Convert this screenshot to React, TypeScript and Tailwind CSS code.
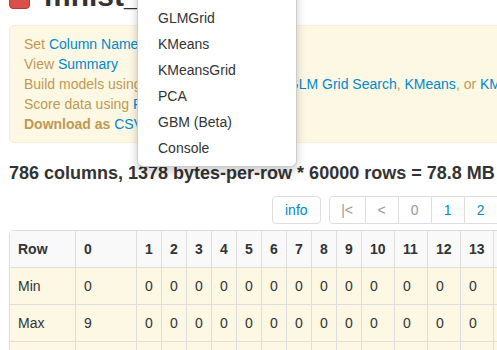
import React from "react";

const menuItems = ["GLM", "GLMGrid", "KMeans", "KMeansGrid", "PCA", "GBM (Beta)", "Console"];

const cols = ["0", "1", "2", "3", "4", "5", "6", "7", "8", "9", "10", "11", "12", "13", "14", "15"];

const rows = [
  { name: "Min", first: "0" },
  { name: "Max", first: "9" },
  { name: "Mean", first: "4.45" },
];

const App = () => {
  return (
    <div
      className="relative h-[350px] w-[497px] overflow-hidden bg-white text-[14px] leading-[20px] text-[#333]"
      style={{ fontFamily: '"Liberation Sans", Arial, sans-serif' }}
    >
      <div className="w-[1200px] pl-[9px]">
        {/* Title row, page is scrolled so only the bottom shows */}
        <div className="-mt-[22px] mb-[11px] flex items-start gap-[14px]">
          <button className="mt-[1px] h-[30px] w-[21px] rounded-[4px] border border-[#bd362f] bg-[#da4f49] text-[12px] font-bold text-white">
            x
          </button>
          <h1 className="text-[30px] font-bold leading-[36px] text-[#333]">mnist_train.hex</h1>
        </div>

        {/* Alert */}
        <div className="w-[700px] rounded-[4px] border border-[#fbeed5] bg-[#fcf8e3] py-[8px] pl-[14px] pr-[35px] text-[#c09853]">
          <div>
            Set <a className="text-[#0088cc]">Column Names</a>
          </div>
          <div>
            View <a className="text-[#0088cc]">Summary</a>
          </div>
          <div>
            Build models using <a className="text-[#0088cc]">Random Forest</a>,{" "}
            <a className="text-[#0088cc]">GLM</a>, <a className="text-[#0088cc]">GLM Grid Search</a>,{" "}
            <a className="text-[#0088cc]">KMeans</a>, or <a className="text-[#0088cc]">KMeansGrid</a>
          </div>
          <div>
            Score data using <a className="text-[#0088cc]">Random Forest</a>
          </div>
          <div>
            <b>Download as</b> <a className="text-[#0088cc]">CSV</a>
          </div>
        </div>

        <h4 className="mt-[20px] mb-[13px] text-[18px] font-bold leading-[20px] text-[#333]">
          786 columns, 1378 bytes-per-row * 60000 rows = 78.8 MB
        </h4>

        {/* pager */}
        <div className="ml-[263px] flex items-center gap-[8px]">
          <button className="h-[28px] rounded-[4px] border border-[#ddd] bg-white px-[12px] text-[#0088cc]">
            info
          </button>
          <ul className="flex rounded-[4px] border border-[#ddd] bg-white">
            <li className="w-[36px] border-r border-[#ddd] text-center leading-[26px] text-[#999]">|&lt;</li>
            <li className="w-[33px] border-r border-[#ddd] text-center leading-[26px] text-[#999]">&lt;</li>
            <li className="w-[33px] border-r border-[#ddd] text-center leading-[26px] text-[#999]">0</li>
            <li className="w-[33px] border-r border-[#ddd] text-center leading-[26px] text-[#0088cc]">1</li>
            <li className="w-[33px] border-r border-[#ddd] text-center leading-[26px] text-[#0088cc]">2</li>
            <li className="w-[33px] border-r border-[#ddd] text-center leading-[26px] text-[#0088cc]">3</li>
          </ul>
        </div>

        {/* table */}
        <table className="mt-[6px] border-separate border-spacing-0 rounded-[4px] border border-[#ddd]">
          <thead>
            <tr className="bg-[#f9f9f9]">
              <th className="w-[65px] px-[8px] py-[8px] text-left font-bold">Row</th>
              {cols.map((c) => (
                <th
                  key={c}
                  className={`border-l border-[#ddd] px-[8px] py-[8px] text-left font-bold ${
                    c === "0" ? "w-[61px]" : c.length > 1 ? "w-[33px]" : "w-[25px]"
                  }`}
                >
                  {c}
                </th>
              ))}
            </tr>
          </thead>
          <tbody>
            {rows.map((r) => (
              <tr key={r.name} className="bg-[#fcf8e3]">
                <td className="border-t border-[#ddd] px-[8px] py-[8px]">{r.name}</td>
                {cols.map((c) => (
                  <td key={c} className="border-l border-t border-[#ddd] px-[8px] py-[8px]">
                    {c === "0" ? r.first : "0"}
                  </td>
                ))}
              </tr>
            ))}
          </tbody>
        </table>
      </div>

      {/* open dropdown menu */}
      <ul className="absolute left-[137px] top-[-27px] w-[160px] rounded-[6px] border border-[rgba(0,0,0,0.2)] bg-white py-[5px] shadow-[0_5px_10px_rgba(0,0,0,0.2)]">
        {menuItems.map((m) => (
          <li key={m} className="px-[20px] py-[3px] leading-[20px] text-[#333]">
            {m}
          </li>
        ))}
      </ul>
    </div>
  );
};

export default App;
